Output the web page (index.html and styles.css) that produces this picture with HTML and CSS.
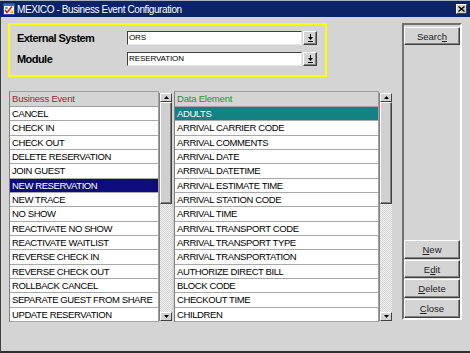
FILE: index.html
```html
<!DOCTYPE html>
<html lang="en">

<head>
  <meta charset="UTF-8">
  <meta name="viewport" content="width=device-width, initial-scale=1.0">
  <title>MEXICO - Business Event Configuration</title>
  <link rel="stylesheet" href="styles.css">
</head>

<body>
  <div class="window">
    <div class="titlebar">
      <svg class="app-icon" width="12" height="12" viewBox="0 0 12 12">
        <rect x="0.5" y="0.5" width="11" height="11" fill="#fff" stroke="#2a4a9a" />
        <rect x="1" y="1" width="10" height="2" fill="#3a66c8" />
        <rect x="2" y="4" width="3" height="2" fill="#7aa0e0" />
        <path d="M2 7l2 2.5 5-6" stroke="#d01818" stroke-width="1.6" fill="none" />
        <rect x="7.5" y="7.5" width="3" height="3" fill="#f0c000" />
      </svg>
      <span class="title">MEXICO - Business Event Configuration</span>
      <button class="close-btn">
        <svg width="7" height="6" viewBox="0 0 7 6">
          <path d="M0.5 0.5l6 5M6.5 0.5l-6 5" stroke="#000" stroke-width="1.4" />
        </svg>
      </button>
    </div>

    <div class="content">
      <div class="main">
        <div class="filter-box">
          <div class="field">
            <label>External System</label>
            <div class="input">ORS</div>
            <button class="drop-btn">
              <svg width="7" height="8" viewBox="0 0 7 8">
                <path d="M3 0h1v3h2L3.5 6 1 3h2z" fill="#000" />
                <rect x="1" y="7" width="5" height="1" fill="#000" />
              </svg>
            </button>
          </div>
          <div class="field">
            <label>Module</label>
            <div class="input">RESERVATION</div>
            <button class="drop-btn">
              <svg width="7" height="8" viewBox="0 0 7 8">
                <path d="M3 0h1v3h2L3.5 6 1 3h2z" fill="#000" />
                <rect x="1" y="7" width="5" height="1" fill="#000" />
              </svg>
            </button>
          </div>
        </div>

        <div class="lists">
          <div class="list list-events">
            <div class="list-head head-events">Business Event</div>
            <div class="row">CANCEL</div>
            <div class="row">CHECK IN</div>
            <div class="row">CHECK OUT</div>
            <div class="row">DELETE RESERVATION</div>
            <div class="row">JOIN GUEST</div>
            <div class="row selected">NEW RESERVATION</div>
            <div class="row">NEW TRACE</div>
            <div class="row">NO SHOW</div>
            <div class="row">REACTIVATE NO SHOW</div>
            <div class="row">REACTIVATE WAITLIST</div>
            <div class="row">REVERSE CHECK IN</div>
            <div class="row">REVERSE CHECK OUT</div>
            <div class="row">ROLLBACK CANCEL</div>
            <div class="row">SEPARATE GUEST FROM SHARE</div>
            <div class="row">UPDATE RESERVATION</div>
          </div>
          <div class="scrollbar scroll-events">
            <div class="scroll-btn"><svg width="5" height="3" viewBox="0 0 5 3"><path d="M2.5 0L5 3H0z" /></svg></div>
            <div class="scroll-thumb"></div>
            <div class="scroll-track"></div>
            <div class="scroll-btn"><svg width="5" height="3" viewBox="0 0 5 3"><path d="M0 0h5L2.5 3z" /></svg></div>
          </div>

          <div class="list list-data">
            <div class="list-head head-data">Data Element</div>
            <div class="row current">ADULTS</div>
            <div class="row">ARRIVAL CARRIER CODE</div>
            <div class="row">ARRIVAL COMMENTS</div>
            <div class="row">ARRIVAL DATE</div>
            <div class="row">ARRIVAL DATETIME</div>
            <div class="row">ARRIVAL ESTIMATE TIME</div>
            <div class="row">ARRIVAL STATION CODE</div>
            <div class="row">ARRIVAL TIME</div>
            <div class="row">ARRIVAL TRANSPORT CODE</div>
            <div class="row">ARRIVAL TRANSPORT TYPE</div>
            <div class="row">ARRIVAL TRANSPORTATION</div>
            <div class="row">AUTHORIZE DIRECT BILL</div>
            <div class="row">BLOCK CODE</div>
            <div class="row">CHECKOUT TIME</div>
            <div class="row">CHILDREN</div>
          </div>
          <div class="scrollbar">
            <div class="scroll-btn"><svg width="5" height="3" viewBox="0 0 5 3"><path d="M2.5 0L5 3H0z" /></svg></div>
            <div class="scroll-thumb"></div>
            <div class="scroll-track"></div>
            <div class="scroll-btn"><svg width="5" height="3" viewBox="0 0 5 3"><path d="M0 0h5L2.5 3z" /></svg></div>
          </div>
        </div>
      </div>

      <div class="side-panel">
        <button class="btn search-btn">Searc<u>h</u></button>
        <div class="btn-group">
          <button class="btn"><u>N</u>ew</button>
          <button class="btn btn-short">E<u>d</u>it</button>
          <button class="btn"><u>D</u>elete</button>
          <button class="btn"><u>C</u>lose</button>
        </div>
      </div>
    </div>
  </div>
</body>

</html>
```

FILE: styles.css
```css
* {
  margin: 0;
  padding: 0;
  box-sizing: border-box;
  font-family: 'Liberation Sans', Arial, sans-serif;
}

body {
  background: #d4d4d4;
}

.window {
  width: 470px;
  height: 353px;
  background: #d4d4d4;
  display: flex;
  flex-direction: column;
}

/* 標題列 */
.titlebar {
  height: 17px;
  background: #0b2469;
  border-top: 1px solid #a8b0c8;
  display: flex;
  align-items: center;
  padding-left: 3px;
}

.app-icon {
  margin-right: 2px;
}

.title {
  flex: 1;
  color: #fff;
  font-size: 10px;
  letter-spacing: -0.4px;
}

.close-btn {
  width: 11px;
  height: 10px;
  margin-right: 3px;
  background: #d4d4d4;
  border: 1px solid;
  border-color: #fff #404040 #404040 #fff;
  display: flex;
  align-items: center;
  justify-content: center;
}

/* 主體 */
.content {
  flex: 1;
  display: flex;
  gap: 10px;
  padding: 6px 8px 0 7px;
  border-left: 1px solid #404040;
  border-bottom: 2px solid #303030;
}

.main {
  width: 384px;
}

.filter-box {
  width: 319px;
  height: 54px;
  border: 2px solid #ffff00;
  padding: 6px 0 0 7px;
}

.field {
  display: flex;
  align-items: center;
  height: 14px;
}

.field + .field {
  margin-top: 7px;
}

.field label {
  width: 110px;
  font-size: 11px;
  font-weight: bold;
  letter-spacing: -0.55px;
}

.input {
  width: 175px;
  height: 14px;
  background: #fff;
  border: 1px solid;
  border-color: #404040 #e8e8e8 #e8e8e8 #404040;
  font-size: 8px;
  line-height: 12px;
  padding-left: 1px;
  letter-spacing: -0.1px;
}

.drop-btn {
  width: 14px;
  height: 14px;
  margin-left: 1px;
  background: #d4d4d4;
  border: 1px solid;
  border-color: #fff #404040 #404040 #fff;
  box-shadow: inset -1px -1px #808080;
  display: flex;
  align-items: center;
  justify-content: center;
}

/* 清單 */
.lists {
  display: flex;
  margin: 14px 0 0 1px;
}

.list {
  border-top: 1px solid #a0a0a0;
  border-left: 1px solid #808080;
  border-right: 1px solid #a0a0a0;
}

.list-events {
  width: 150px;
}

.list-data {
  width: 205px;
}

.list-head {
  height: 15px;
  line-height: 14px;
  padding-left: 2px;
  font-size: 9.5px;
  letter-spacing: -0.2px;
  border-bottom: 1px solid #a0a0a0;
}

.head-events {
  color: #a02828;
}

.head-data {
  color: #1a9a1a;
}

.row {
  height: 14.33px;
  line-height: 13.33px;
  padding-left: 2px;
  background: #fff;
  border-bottom: 1px solid #a8a8a8;
  font-size: 9.5px;
  letter-spacing: -0.4px;
  white-space: nowrap;
  overflow: hidden;
}

.row.selected {
  background: #0c0c7c;
  color: #fff;
}

.row.current {
  background: #128282;
  color: #fff;
}

.scrollbar {
  width: 13px;
  height: 228px;
  margin-top: 2px;
  display: flex;
  flex-direction: column;
  border-left: 1px solid #808080;
  background: repeating-conic-gradient(#d4d4d4 0 25%, #f2f2f2 0 50%) 0 0/2px 2px;
}

.scroll-events {
  margin-right: 2px;
}

.scroll-btn {
  height: 9px;
  background: #d4d4d4;
  border: 1px solid;
  border-color: #fff #404040 #404040 #fff;
  display: flex;
  align-items: center;
  justify-content: center;
}

.scroll-thumb {
  height: 102px;
  background: #d0d0d0;
  border: 1px solid;
  border-color: #fff #404040 #404040 #fff;
  box-shadow: inset -1px -1px #808080;
}

.scroll-track {
  flex: 1;
}

/* 右側按鈕 */
.side-panel {
  width: 60px;
  height: 297px;
  border: 2px solid;
  border-color: #707070 #fff #fff #707070;
  display: flex;
  flex-direction: column;
}

.btn {
  width: 100%;
  height: 19px;
  background: #d4d4d4;
  border: 1px solid;
  border-color: #fff #404040 #404040 #fff;
  box-shadow: inset -1px -1px #808080;
  font-size: 9.5px;
  font-weight: normal;
  color: #222;
}

.btn-short {
  height: 18px;
}

.search-btn {
  height: 18px;
  margin-top: 2px;
}

.btn-group {
  margin-top: auto;
}
```
